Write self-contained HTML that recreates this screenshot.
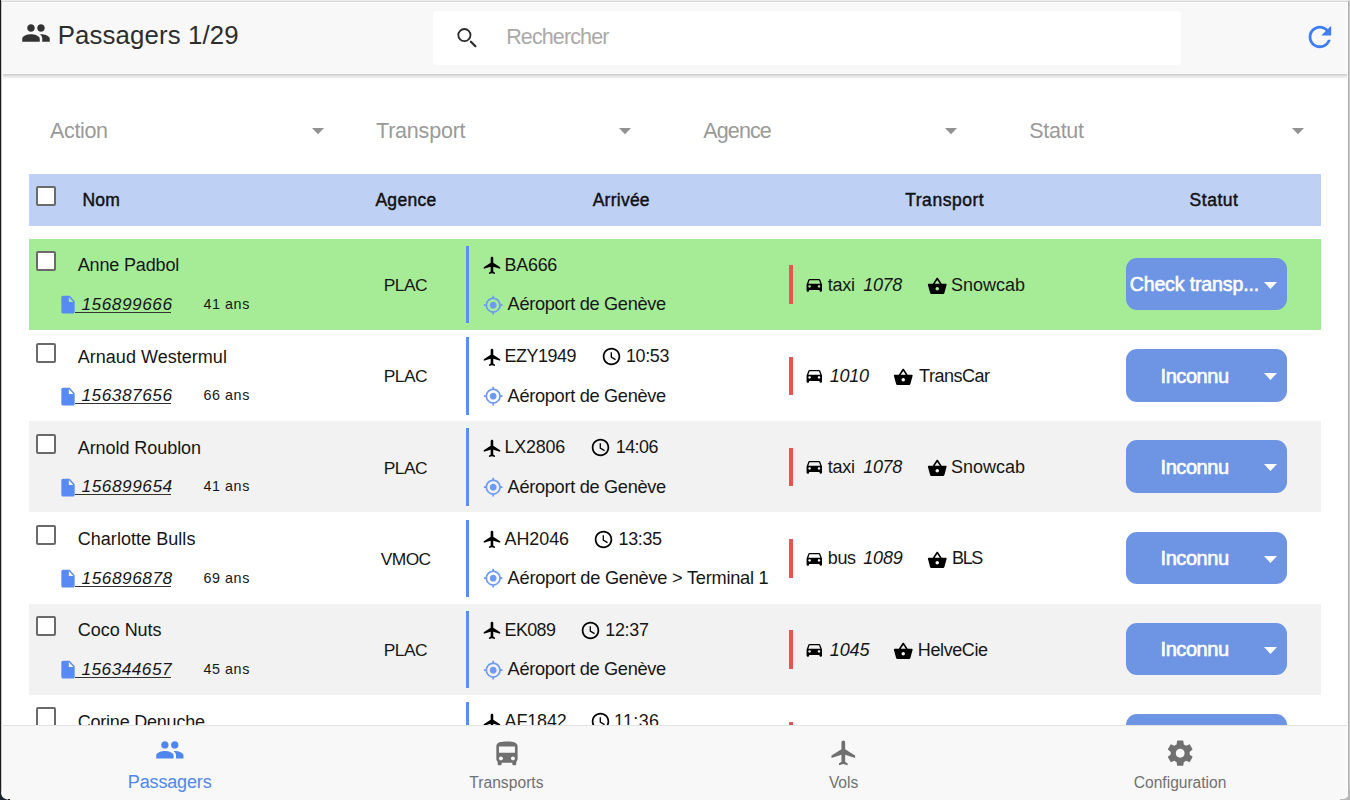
<!DOCTYPE html>
<html><head><meta charset="utf-8"><title>Passagers</title>
<style>
html,body{margin:0;padding:0;}
body{width:1350px;height:800px;overflow:hidden;position:relative;background:#ffffff;font-family:"Liberation Sans", sans-serif;}
</style></head><body>
<div style="position:absolute;left:0.00px;top:0.00px;width:1350.00px;height:74.00px;background:#f8f8f8;box-shadow:0 1.5px 4px rgba(0,0,0,0.24);z-index:2"></div><div style="position:absolute;left:0;top:0;width:0;height:0;z-index:3"><svg style="position:absolute;left:21.00px;top:17.75px;" width="30.00" height="30.00" viewBox="0 0 24 24"><path fill="#333333" d="M16 11c1.66 0 2.99-1.34 2.99-3S17.66 5 16 5c-1.66 0-3 1.34-3 3s1.34 3 3 3zm-8 0c1.66 0 2.99-1.34 2.99-3S9.66 5 8 5C6.34 5 5 6.34 5 8s1.34 3 3 3zm0 2c-2.33 0-7 1.17-7 3.5V19h14v-2.5c0-2.33-4.67-3.5-7-3.5zm8 0c-.29 0-.62.02-.97.05 1.16.84 1.97 1.97 1.97 3.45V19h6v-2.5c0-2.330-4.67-3.5-7-3.5z"/></svg><div style="position:absolute;left:57.70px;top:23.00px;font-size:25.8px;line-height:25.8px;letter-spacing:0.122px;color:#2d2d2d;font-weight:normal;font-style:normal;white-space:nowrap;">Passagers 1/29</div><div style="position:absolute;left:433.00px;top:10.60px;width:748.00px;height:54.20px;background:#ffffff;border-radius:3px"></div><svg style="position:absolute;left:450px;top:20px" width="32" height="32"><circle cx="14.4" cy="15.1" r="6.1" fill="none" stroke="#2a2a2a" stroke-width="1.8"/><line x1="20.9" y1="21.7" x2="25.4" y2="26.2" stroke="#2a2a2a" stroke-width="2.2" stroke-linecap="round"/></svg><div style="position:absolute;left:506.20px;top:27.00px;font-size:21.5px;line-height:21.5px;letter-spacing:-0.884px;color:#a9a9a9;font-weight:normal;font-style:normal;white-space:nowrap;">Rechercher</div><svg style="position:absolute;left:1303.40px;top:19.90px;" width="33.75" height="33.75" viewBox="0 0 24 24"><path fill="#3d7ef3" d="M17.65 6.35C16.2 4.9 14.21 4 12 4c-4.42 0-7.99 3.58-7.99 8s3.57 8 7.99 8c3.73 0 6.84-2.55 7.73-6h-2.08c-.82 2.33-3.04 4-5.65 4-3.31 0-6-2.69-6-6s2.690-6 6-6c1.66 0 3.14.69 4.22 1.78L13 11h7V4l-2.35 2.35z"/></svg></div><div style="position:absolute;left:50.00px;top:121.00px;font-size:21.5px;line-height:21.5px;letter-spacing:-0.354px;color:#9a9a9a;font-weight:normal;font-style:normal;white-space:nowrap;">Action</div><svg style="position:absolute;left:311.30px;top:126.80px;" width="14.00" height="8.20"><polygon fill="#929292" points="1,1 13.00,1 7.00,7.20"/></svg><div style="position:absolute;left:376.00px;top:121.00px;font-size:21.5px;line-height:21.5px;letter-spacing:-0.202px;color:#9a9a9a;font-weight:normal;font-style:normal;white-space:nowrap;">Transport</div><svg style="position:absolute;left:618.00px;top:126.80px;" width="14.00" height="8.20"><polygon fill="#929292" points="1,1 13.00,1 7.00,7.20"/></svg><div style="position:absolute;left:703.30px;top:121.00px;font-size:21.5px;line-height:21.5px;letter-spacing:-0.888px;color:#9a9a9a;font-weight:normal;font-style:normal;white-space:nowrap;">Agence</div><svg style="position:absolute;left:943.50px;top:126.80px;" width="14.00" height="8.20"><polygon fill="#929292" points="1,1 13.00,1 7.00,7.20"/></svg><div style="position:absolute;left:1029.30px;top:121.00px;font-size:21.5px;line-height:21.5px;letter-spacing:-0.294px;color:#9a9a9a;font-weight:normal;font-style:normal;white-space:nowrap;">Statut</div><svg style="position:absolute;left:1291.30px;top:126.80px;" width="14.00" height="8.20"><polygon fill="#929292" points="1,1 13.00,1 7.00,7.20"/></svg><div style="position:absolute;left:29.00px;top:174.00px;width:1292.00px;height:51.50px;background:#bfd0f5;"></div><div style="position:absolute;left:35.50px;top:185.50px;width:20.20px;height:20.50px;background:#ffffff;box-sizing:border-box;border:2.2px solid #6a6a6a;border-radius:2px"></div><div style="position:absolute;left:82.50px;top:192.00px;font-size:17.5px;line-height:17.5px;letter-spacing:0.166px;color:#111;font-weight:normal;font-style:normal;white-space:nowrap;-webkit-text-stroke:0.45px #111;">Nom</div><div style="position:absolute;left:375.40px;top:192.00px;font-size:17.5px;line-height:17.5px;letter-spacing:0.306px;color:#111;font-weight:normal;font-style:normal;white-space:nowrap;-webkit-text-stroke:0.45px #111;">Agence</div><div style="position:absolute;left:592.70px;top:192.00px;font-size:17.5px;line-height:17.5px;letter-spacing:0.245px;color:#111;font-weight:normal;font-style:normal;white-space:nowrap;-webkit-text-stroke:0.45px #111;">Arrivée</div><div style="position:absolute;left:905.20px;top:192.00px;font-size:17.5px;line-height:17.5px;letter-spacing:0.532px;color:#111;font-weight:normal;font-style:normal;white-space:nowrap;-webkit-text-stroke:0.45px #111;">Transport</div><div style="position:absolute;left:1189.60px;top:192.00px;font-size:17.5px;line-height:17.5px;letter-spacing:0.516px;color:#111;font-weight:normal;font-style:normal;white-space:nowrap;-webkit-text-stroke:0.45px #111;">Statut</div><div style="position:absolute;left:29.00px;top:239.00px;width:1292.00px;height:91.20px;background:#a6ec97;"></div><div style="position:absolute;left:35.50px;top:251.20px;width:20.20px;height:20.00px;background:#ffffff;box-sizing:border-box;border:2.2px solid #6a6a6a;border-radius:2px"></div><div style="position:absolute;left:77.70px;top:256.00px;font-size:18px;line-height:18px;letter-spacing:-0.149px;color:#161616;font-weight:normal;font-style:normal;white-space:nowrap;">Anne Padbol</div><svg style="position:absolute;left:57.6px;top:294.20px" width="20" height="21.4" viewBox="0 0 24 24" preserveAspectRatio="none"><path fill="#578af5" d="M6 2c-1.1 0-1.99.9-1.99 2L4 20c0 1.1.89 2 1.99 2H18c1.1 0 2-.9 2-2V8l-6-6H6zm7 7V3.5L18.5 9H13z"/></svg><div style="position:absolute;left:74.80px;top:312.00px;width:96.20px;height:1.20px;background:#333;"></div><div style="position:absolute;left:81.50px;top:296.00px;font-size:17.3px;line-height:17.3px;letter-spacing:0.509px;color:#161616;font-weight:normal;font-style:italic;white-space:nowrap;">156899666</div><div style="position:absolute;left:203.40px;top:297.00px;font-size:14.3px;line-height:14.3px;letter-spacing:0.593px;color:#161616;font-weight:normal;font-style:normal;white-space:nowrap;">41 ans</div><div style="position:absolute;left:383.70px;top:277.00px;font-size:17.4px;line-height:17.4px;letter-spacing:-0.519px;color:#161616;font-weight:normal;font-style:normal;white-space:nowrap;">PLAC</div><div style="position:absolute;left:465.80px;top:245.70px;width:3.50px;height:77.50px;background:#5b8ff7;"></div><svg style="position:absolute;left:481.50px;top:255.40px;" width="20.80" height="20.80" viewBox="0 0 24 24"><path fill="#000" d="M21 16v-2l-8-5V3.5c0-.83-.67-1.5-1.5-1.5S10 2.67 10 3.5V9l-8 5v2l8-2.5V19l-2 1.5V22l3.5-1 3.5 1v-1.5L13 19v-5.5l8 2.5z"/></svg><div style="position:absolute;left:504.60px;top:257.00px;font-size:17.9px;line-height:17.9px;letter-spacing:-0.261px;color:#161616;font-weight:normal;font-style:normal;white-space:nowrap;">BA666</div><svg style="position:absolute;left:482.80px;top:294.50px;" width="20.40" height="20.40" viewBox="0 0 24 24"><path fill="#6d9af5" d="M12 8c-2.21 0-4 1.79-4 4s1.79 4 4 4 4-1.79 4-4-1.79-4-4-4zm8.94 3c-.46-4.17-3.77-7.48-7.94-7.94V1h-2v2.06C6.83 3.52 3.52 6.83 3.06 11H1v2h2.06c.46 4.17 3.77 7.48 7.94 7.94V23h2v-2.06c4.17-.46 7.48-3.77 7.94-7.94H23v-2h-2.06zM12 19c-3.87 0-7-3.13-7-7s3.13-7 7-7 7 3.13 7 7-3.13 7-7 7z"/></svg><div style="position:absolute;left:507.60px;top:295.00px;font-size:18.2px;line-height:18.2px;letter-spacing:-0.305px;color:#161616;font-weight:normal;font-style:normal;white-space:nowrap;">Aéroport de Genève</div><div style="position:absolute;left:789.00px;top:265.40px;width:3.50px;height:38.80px;background:#eb5350;"></div><svg style="position:absolute;left:804.03px;top:274.60px" width="20.6" height="19" viewBox="0 0 24 24" preserveAspectRatio="none"><path fill="#000" d="M18.92 6.01C18.72 5.42 18.16 5 17.5 5h-11c-.66 0-1.21.42-1.42 1.01L3 12v8c0 .55.45 1 1 1h1c.55 0 1-.45 1-1v-1h12v1c0 .55.45 1 1 1h1c.55 0 1-.45 1-1v-8l-2.08-5.99zM6.5 16c-.83 0-1.5-.67-1.5-1.5S5.67 13 6.5 13s1.5.67 1.5 1.5S7.33 16 6.5 16zm11 0c-.83 0-1.5-.67-1.5-1.5s.67-1.5 1.5-1.5 1.5.67 1.5 1.5-.67 1.5-1.5 1.5zM5 11l1.5-4.5h11L19 11H5z"/></svg><div style="position:absolute;left:827.80px;top:276.00px;font-size:18px;line-height:18px;letter-spacing:-0.230px;color:#161616;font-weight:normal;font-style:normal;white-space:nowrap;">taxi</div><div style="position:absolute;left:863.20px;top:276.00px;font-size:18px;line-height:18px;letter-spacing:-0.317px;color:#161616;font-weight:normal;font-style:italic;white-space:nowrap;">1078</div><svg style="position:absolute;left:926.70px;top:275.60px;" width="20.50" height="20.50" viewBox="0 0 24 24"><path fill="#000" d="M17.21 9l-4.38-6.56c-.19-.28-.51-.42-.83-.42-.32 0-.64.14-.83.43L6.79 9H2c-.55 0-1 .45-1 1 0 .09.01.18.04.27l2.54 9.27c.23.84 1 1.46 1.92 1.46h13c.92 0 1.69-.62 1.93-1.46l2.54-9.27L23 10c0-.55-.45-1-1-1h-4.79zM9 9l3-4.4L15 9H9zm3 8c-1.1 0-2-.9-2-2s.9-2 2-2 2 .9 2 2-.9 2-2 2z"/></svg><div style="position:absolute;left:951.00px;top:276.00px;font-size:18px;line-height:18px;letter-spacing:-0.012px;color:#161616;font-weight:normal;font-style:normal;white-space:nowrap;">Snowcab</div><div style="position:absolute;left:1126.00px;top:258.10px;width:161.30px;height:52.20px;background:#6d95e4;border-radius:11px"></div><div style="position:absolute;left:1129.70px;top:275.00px;font-size:19.5px;line-height:19.5px;letter-spacing:-0.117px;color:#ffffff;font-weight:normal;font-style:normal;white-space:nowrap;-webkit-text-stroke:0.6px #fff;">Check transp...</div><svg style="position:absolute;left:1263.00px;top:280.80px;" width="15.00" height="9.00"><polygon fill="#ffffff" points="1,1 14.00,1 7.50,8.00"/></svg><div style="position:absolute;left:29.00px;top:330.30px;width:1292.00px;height:91.20px;background:#ffffff;"></div><div style="position:absolute;left:35.50px;top:342.50px;width:20.20px;height:20.00px;background:#ffffff;box-sizing:border-box;border:2.2px solid #6a6a6a;border-radius:2px"></div><div style="position:absolute;left:77.70px;top:348.00px;font-size:18px;line-height:18px;letter-spacing:0.032px;color:#161616;font-weight:normal;font-style:normal;white-space:nowrap;">Arnaud Westermul</div><svg style="position:absolute;left:57.6px;top:385.50px" width="20" height="21.4" viewBox="0 0 24 24" preserveAspectRatio="none"><path fill="#578af5" d="M6 2c-1.1 0-1.99.9-1.99 2L4 20c0 1.1.89 2 1.99 2H18c1.1 0 2-.9 2-2V8l-6-6H6zm7 7V3.5L18.5 9H13z"/></svg><div style="position:absolute;left:74.80px;top:403.30px;width:96.20px;height:1.20px;background:#333;"></div><div style="position:absolute;left:81.50px;top:387.00px;font-size:17.3px;line-height:17.3px;letter-spacing:0.509px;color:#161616;font-weight:normal;font-style:italic;white-space:nowrap;">156387656</div><div style="position:absolute;left:203.40px;top:388.00px;font-size:14.3px;line-height:14.3px;letter-spacing:0.593px;color:#161616;font-weight:normal;font-style:normal;white-space:nowrap;">66 ans</div><div style="position:absolute;left:383.70px;top:368.00px;font-size:17.4px;line-height:17.4px;letter-spacing:-0.519px;color:#161616;font-weight:normal;font-style:normal;white-space:nowrap;">PLAC</div><div style="position:absolute;left:465.80px;top:337.00px;width:3.50px;height:77.50px;background:#5b8ff7;"></div><svg style="position:absolute;left:481.50px;top:346.70px;" width="20.80" height="20.80" viewBox="0 0 24 24"><path fill="#000" d="M21 16v-2l-8-5V3.5c0-.83-.67-1.5-1.5-1.5S10 2.67 10 3.5V9l-8 5v2l8-2.5V19l-2 1.5V22l3.5-1 3.5 1v-1.5L13 19v-5.5l8 2.5z"/></svg><div style="position:absolute;left:504.60px;top:348.00px;font-size:17.9px;line-height:17.9px;letter-spacing:-0.474px;color:#161616;font-weight:normal;font-style:normal;white-space:nowrap;">EZY1949</div><svg style="position:absolute;left:601.04px;top:346.30px;" width="21.00" height="21.00" viewBox="0 0 24 24"><path fill="#000" d="M11.99 2C6.47 2 2 6.48 2 12s4.47 10 9.99 10C17.52 22 22 17.52 22 12S17.52 2 11.99 2zM12 20c-4.42 0-8-3.58-8-8s3.58-8 8-8 8 3.58 8 8-3.58 8-8 8zm.5-13H11v6l5.25 3.15.75-1.23-4.5-2.67z"/></svg><div style="position:absolute;left:625.90px;top:348.00px;font-size:17.9px;line-height:17.9px;letter-spacing:-0.324px;color:#161616;font-weight:normal;font-style:normal;white-space:nowrap;">10:53</div><svg style="position:absolute;left:482.80px;top:385.80px;" width="20.40" height="20.40" viewBox="0 0 24 24"><path fill="#6d9af5" d="M12 8c-2.21 0-4 1.79-4 4s1.79 4 4 4 4-1.79 4-4-1.79-4-4-4zm8.94 3c-.46-4.17-3.77-7.48-7.94-7.94V1h-2v2.06C6.83 3.52 3.52 6.83 3.06 11H1v2h2.06c.46 4.17 3.77 7.48 7.94 7.94V23h2v-2.06c4.17-.46 7.48-3.77 7.94-7.94H23v-2h-2.06zM12 19c-3.87 0-7-3.13-7-7s3.13-7 7-7 7 3.13 7 7-3.13 7-7 7z"/></svg><div style="position:absolute;left:507.60px;top:387.00px;font-size:18.2px;line-height:18.2px;letter-spacing:-0.305px;color:#161616;font-weight:normal;font-style:normal;white-space:nowrap;">Aéroport de Genève</div><div style="position:absolute;left:789.00px;top:356.70px;width:3.50px;height:38.80px;background:#eb5350;"></div><svg style="position:absolute;left:804.03px;top:365.90px" width="20.6" height="19" viewBox="0 0 24 24" preserveAspectRatio="none"><path fill="#000" d="M18.92 6.01C18.72 5.42 18.16 5 17.5 5h-11c-.66 0-1.21.42-1.42 1.01L3 12v8c0 .55.45 1 1 1h1c.55 0 1-.45 1-1v-1h12v1c0 .55.45 1 1 1h1c.55 0 1-.45 1-1v-8l-2.08-5.99zM6.5 16c-.83 0-1.5-.67-1.5-1.5S5.67 13 6.5 13s1.5.67 1.5 1.5S7.33 16 6.5 16zm11 0c-.83 0-1.5-.67-1.5-1.5s.67-1.5 1.5-1.5 1.5.67 1.5 1.5-.67 1.5-1.5 1.5zM5 11l1.5-4.5h11L19 11H5z"/></svg><div style="position:absolute;left:829.70px;top:367.00px;font-size:18px;line-height:18px;letter-spacing:-0.250px;color:#161616;font-weight:normal;font-style:italic;white-space:nowrap;">1010</div><svg style="position:absolute;left:892.70px;top:366.90px;" width="20.50" height="20.50" viewBox="0 0 24 24"><path fill="#000" d="M17.21 9l-4.38-6.56c-.19-.28-.51-.42-.83-.42-.32 0-.64.14-.83.43L6.79 9H2c-.55 0-1 .45-1 1 0 .09.01.18.04.27l2.54 9.27c.23.84 1 1.46 1.92 1.46h13c.92 0 1.69-.62 1.93-1.46l2.54-9.27L23 10c0-.55-.45-1-1-1h-4.79zM9 9l3-4.4L15 9H9zm3 8c-1.1 0-2-.9-2-2s.9-2 2-2 2 .9 2 2-.9 2-2 2z"/></svg><div style="position:absolute;left:919.10px;top:367.00px;font-size:18px;line-height:18px;letter-spacing:-0.491px;color:#161616;font-weight:normal;font-style:normal;white-space:nowrap;">TransCar</div><div style="position:absolute;left:1126.00px;top:349.40px;width:161.30px;height:52.20px;background:#6d95e4;border-radius:11px"></div><div style="position:absolute;left:1160.60px;top:366.00px;font-size:20px;line-height:20px;letter-spacing:-0.458px;color:#ffffff;font-weight:normal;font-style:normal;white-space:nowrap;-webkit-text-stroke:0.6px #fff;">Inconnu</div><svg style="position:absolute;left:1263.00px;top:372.10px;" width="15.00" height="9.00"><polygon fill="#ffffff" points="1,1 14.00,1 7.50,8.00"/></svg><div style="position:absolute;left:29.00px;top:421.30px;width:1292.00px;height:91.20px;background:#f2f2f2;"></div><div style="position:absolute;left:35.50px;top:433.50px;width:20.20px;height:20.00px;background:#ffffff;box-sizing:border-box;border:2.2px solid #6a6a6a;border-radius:2px"></div><div style="position:absolute;left:77.70px;top:439.00px;font-size:18px;line-height:18px;letter-spacing:-0.055px;color:#161616;font-weight:normal;font-style:normal;white-space:nowrap;">Arnold Roublon</div><svg style="position:absolute;left:57.6px;top:476.50px" width="20" height="21.4" viewBox="0 0 24 24" preserveAspectRatio="none"><path fill="#578af5" d="M6 2c-1.1 0-1.99.9-1.99 2L4 20c0 1.1.89 2 1.99 2H18c1.1 0 2-.9 2-2V8l-6-6H6zm7 7V3.5L18.5 9H13z"/></svg><div style="position:absolute;left:74.80px;top:494.30px;width:96.20px;height:1.20px;background:#333;"></div><div style="position:absolute;left:81.50px;top:478.00px;font-size:17.3px;line-height:17.3px;letter-spacing:0.514px;color:#161616;font-weight:normal;font-style:italic;white-space:nowrap;">156899654</div><div style="position:absolute;left:203.40px;top:479.00px;font-size:14.3px;line-height:14.3px;letter-spacing:0.593px;color:#161616;font-weight:normal;font-style:normal;white-space:nowrap;">41 ans</div><div style="position:absolute;left:383.70px;top:460.00px;font-size:17.4px;line-height:17.4px;letter-spacing:-0.519px;color:#161616;font-weight:normal;font-style:normal;white-space:nowrap;">PLAC</div><div style="position:absolute;left:465.80px;top:428.00px;width:3.50px;height:77.50px;background:#5b8ff7;"></div><svg style="position:absolute;left:481.50px;top:437.70px;" width="20.80" height="20.80" viewBox="0 0 24 24"><path fill="#000" d="M21 16v-2l-8-5V3.5c0-.83-.67-1.5-1.5-1.5S10 2.67 10 3.5V9l-8 5v2l8-2.5V19l-2 1.5V22l3.5-1 3.5 1v-1.5L13 19v-5.5l8 2.5z"/></svg><div style="position:absolute;left:504.60px;top:439.00px;font-size:17.9px;line-height:17.9px;letter-spacing:-0.222px;color:#161616;font-weight:normal;font-style:normal;white-space:nowrap;">LX2806</div><svg style="position:absolute;left:590.24px;top:437.30px;" width="21.00" height="21.00" viewBox="0 0 24 24"><path fill="#000" d="M11.99 2C6.47 2 2 6.48 2 12s4.47 10 9.99 10C17.52 22 22 17.52 22 12S17.52 2 11.99 2zM12 20c-4.42 0-8-3.58-8-8s3.58-8 8-8 8 3.58 8 8-3.58 8-8 8zm.5-13H11v6l5.25 3.15.75-1.23-4.5-2.67z"/></svg><div style="position:absolute;left:615.70px;top:439.00px;font-size:17.9px;line-height:17.9px;letter-spacing:-0.499px;color:#161616;font-weight:normal;font-style:normal;white-space:nowrap;">14:06</div><svg style="position:absolute;left:482.80px;top:476.80px;" width="20.40" height="20.40" viewBox="0 0 24 24"><path fill="#6d9af5" d="M12 8c-2.21 0-4 1.79-4 4s1.79 4 4 4 4-1.79 4-4-1.79-4-4-4zm8.94 3c-.46-4.17-3.77-7.48-7.94-7.94V1h-2v2.06C6.83 3.52 3.52 6.83 3.06 11H1v2h2.06c.46 4.17 3.77 7.48 7.94 7.94V23h2v-2.06c4.17-.46 7.48-3.77 7.94-7.94H23v-2h-2.06zM12 19c-3.87 0-7-3.13-7-7s3.13-7 7-7 7 3.13 7 7-3.13 7-7 7z"/></svg><div style="position:absolute;left:507.60px;top:478.00px;font-size:18.2px;line-height:18.2px;letter-spacing:-0.305px;color:#161616;font-weight:normal;font-style:normal;white-space:nowrap;">Aéroport de Genève</div><div style="position:absolute;left:789.00px;top:447.70px;width:3.50px;height:38.80px;background:#eb5350;"></div><svg style="position:absolute;left:804.03px;top:456.90px" width="20.6" height="19" viewBox="0 0 24 24" preserveAspectRatio="none"><path fill="#000" d="M18.92 6.01C18.72 5.42 18.16 5 17.5 5h-11c-.66 0-1.21.42-1.42 1.01L3 12v8c0 .55.45 1 1 1h1c.55 0 1-.45 1-1v-1h12v1c0 .55.45 1 1 1h1c.55 0 1-.45 1-1v-8l-2.08-5.99zM6.5 16c-.83 0-1.5-.67-1.5-1.5S5.67 13 6.5 13s1.5.67 1.5 1.5S7.33 16 6.5 16zm11 0c-.83 0-1.5-.67-1.5-1.5s.67-1.5 1.5-1.5 1.5.67 1.5 1.5-.67 1.5-1.5 1.5zM5 11l1.5-4.5h11L19 11H5z"/></svg><div style="position:absolute;left:827.80px;top:458.00px;font-size:18px;line-height:18px;letter-spacing:-0.230px;color:#161616;font-weight:normal;font-style:normal;white-space:nowrap;">taxi</div><div style="position:absolute;left:863.20px;top:458.00px;font-size:18px;line-height:18px;letter-spacing:-0.317px;color:#161616;font-weight:normal;font-style:italic;white-space:nowrap;">1078</div><svg style="position:absolute;left:926.70px;top:457.90px;" width="20.50" height="20.50" viewBox="0 0 24 24"><path fill="#000" d="M17.21 9l-4.38-6.56c-.19-.28-.51-.42-.83-.42-.32 0-.64.14-.83.43L6.79 9H2c-.55 0-1 .45-1 1 0 .09.01.18.04.27l2.54 9.27c.23.84 1 1.46 1.92 1.46h13c.92 0 1.69-.62 1.93-1.46l2.54-9.27L23 10c0-.55-.45-1-1-1h-4.79zM9 9l3-4.4L15 9H9zm3 8c-1.1 0-2-.9-2-2s.9-2 2-2 2 .9 2 2-.9 2-2 2z"/></svg><div style="position:absolute;left:951.00px;top:458.00px;font-size:18px;line-height:18px;letter-spacing:-0.012px;color:#161616;font-weight:normal;font-style:normal;white-space:nowrap;">Snowcab</div><div style="position:absolute;left:1126.00px;top:440.40px;width:161.30px;height:52.20px;background:#6d95e4;border-radius:11px"></div><div style="position:absolute;left:1160.60px;top:457.00px;font-size:20px;line-height:20px;letter-spacing:-0.458px;color:#ffffff;font-weight:normal;font-style:normal;white-space:nowrap;-webkit-text-stroke:0.6px #fff;">Inconnu</div><svg style="position:absolute;left:1263.00px;top:463.10px;" width="15.00" height="9.00"><polygon fill="#ffffff" points="1,1 14.00,1 7.50,8.00"/></svg><div style="position:absolute;left:29.00px;top:512.90px;width:1292.00px;height:91.20px;background:#ffffff;"></div><div style="position:absolute;left:35.50px;top:525.10px;width:20.20px;height:20.00px;background:#ffffff;box-sizing:border-box;border:2.2px solid #6a6a6a;border-radius:2px"></div><div style="position:absolute;left:77.70px;top:530.00px;font-size:18px;line-height:18px;letter-spacing:0.047px;color:#161616;font-weight:normal;font-style:normal;white-space:nowrap;">Charlotte Bulls</div><svg style="position:absolute;left:57.6px;top:568.10px" width="20" height="21.4" viewBox="0 0 24 24" preserveAspectRatio="none"><path fill="#578af5" d="M6 2c-1.1 0-1.99.9-1.99 2L4 20c0 1.1.89 2 1.99 2H18c1.1 0 2-.9 2-2V8l-6-6H6zm7 7V3.5L18.5 9H13z"/></svg><div style="position:absolute;left:74.80px;top:585.90px;width:96.20px;height:1.20px;background:#333;"></div><div style="position:absolute;left:81.50px;top:570.00px;font-size:17.3px;line-height:17.3px;letter-spacing:0.514px;color:#161616;font-weight:normal;font-style:italic;white-space:nowrap;">156896878</div><div style="position:absolute;left:203.40px;top:571.00px;font-size:14.3px;line-height:14.3px;letter-spacing:0.593px;color:#161616;font-weight:normal;font-style:normal;white-space:nowrap;">69 ans</div><div style="position:absolute;left:380.80px;top:551.00px;font-size:17.4px;line-height:17.4px;letter-spacing:-0.600px;color:#161616;font-weight:normal;font-style:normal;white-space:nowrap;">VMOC</div><div style="position:absolute;left:465.80px;top:519.60px;width:3.50px;height:77.50px;background:#5b8ff7;"></div><svg style="position:absolute;left:481.50px;top:529.30px;" width="20.80" height="20.80" viewBox="0 0 24 24"><path fill="#000" d="M21 16v-2l-8-5V3.5c0-.83-.67-1.5-1.5-1.5S10 2.67 10 3.5V9l-8 5v2l8-2.5V19l-2 1.5V22l3.5-1 3.5 1v-1.5L13 19v-5.5l8 2.5z"/></svg><div style="position:absolute;left:504.60px;top:531.00px;font-size:17.9px;line-height:17.9px;letter-spacing:-0.042px;color:#161616;font-weight:normal;font-style:normal;white-space:nowrap;">AH2046</div><svg style="position:absolute;left:593.14px;top:528.90px;" width="21.00" height="21.00" viewBox="0 0 24 24"><path fill="#000" d="M11.99 2C6.47 2 2 6.48 2 12s4.47 10 9.99 10C17.52 22 22 17.52 22 12S17.52 2 11.99 2zM12 20c-4.42 0-8-3.58-8-8s3.58-8 8-8 8 3.58 8 8-3.58 8-8 8zm.5-13H11v6l5.25 3.15.75-1.23-4.5-2.67z"/></svg><div style="position:absolute;left:618.50px;top:531.00px;font-size:17.9px;line-height:17.9px;letter-spacing:-0.299px;color:#161616;font-weight:normal;font-style:normal;white-space:nowrap;">13:35</div><svg style="position:absolute;left:482.80px;top:568.40px;" width="20.40" height="20.40" viewBox="0 0 24 24"><path fill="#6d9af5" d="M12 8c-2.21 0-4 1.79-4 4s1.79 4 4 4 4-1.79 4-4-1.79-4-4-4zm8.94 3c-.46-4.17-3.77-7.48-7.94-7.94V1h-2v2.06C6.83 3.52 3.52 6.83 3.06 11H1v2h2.06c.46 4.17 3.77 7.48 7.94 7.94V23h2v-2.06c4.17-.46 7.48-3.77 7.94-7.94H23v-2h-2.06zM12 19c-3.87 0-7-3.13-7-7s3.13-7 7-7 7 3.13 7 7-3.13 7-7 7z"/></svg><div style="position:absolute;left:507.60px;top:569.00px;font-size:18.2px;line-height:18.2px;letter-spacing:-0.232px;color:#161616;font-weight:normal;font-style:normal;white-space:nowrap;">Aéroport de Genève &gt; Terminal 1</div><div style="position:absolute;left:789.00px;top:539.30px;width:3.50px;height:38.80px;background:#eb5350;"></div><svg style="position:absolute;left:804.03px;top:548.50px" width="20.6" height="19" viewBox="0 0 24 24" preserveAspectRatio="none"><path fill="#000" d="M18.92 6.01C18.72 5.42 18.16 5 17.5 5h-11c-.66 0-1.21.42-1.42 1.01L3 12v8c0 .55.45 1 1 1h1c.55 0 1-.45 1-1v-1h12v1c0 .55.45 1 1 1h1c.55 0 1-.45 1-1v-8l-2.08-5.99zM6.5 16c-.83 0-1.5-.67-1.5-1.5S5.67 13 6.5 13s1.5.67 1.5 1.5S7.33 16 6.5 16zm11 0c-.83 0-1.5-.67-1.5-1.5s.67-1.5 1.5-1.5 1.5.67 1.5 1.5-.67 1.5-1.5 1.5zM5 11l1.5-4.5h11L19 11H5z"/></svg><div style="position:absolute;left:827.80px;top:549.00px;font-size:18px;line-height:18px;letter-spacing:-0.362px;color:#161616;font-weight:normal;font-style:normal;white-space:nowrap;">bus</div><div style="position:absolute;left:863.20px;top:549.00px;font-size:18px;line-height:18px;letter-spacing:-0.117px;color:#161616;font-weight:normal;font-style:italic;white-space:nowrap;">1089</div><svg style="position:absolute;left:926.70px;top:549.50px;" width="20.50" height="20.50" viewBox="0 0 24 24"><path fill="#000" d="M17.21 9l-4.38-6.56c-.19-.28-.51-.42-.83-.42-.32 0-.64.14-.83.43L6.79 9H2c-.55 0-1 .45-1 1 0 .09.01.18.04.27l2.54 9.27c.23.84 1 1.46 1.92 1.46h13c.92 0 1.69-.62 1.93-1.46l2.54-9.27L23 10c0-.55-.45-1-1-1h-4.79zM9 9l3-4.4L15 9H9zm3 8c-1.1 0-2-.9-2-2s.9-2 2-2 2 .9 2 2-.9 2-2 2z"/></svg><div style="position:absolute;left:952.00px;top:549.00px;font-size:18px;line-height:18px;letter-spacing:-1.360px;color:#161616;font-weight:normal;font-style:normal;white-space:nowrap;">BLS</div><div style="position:absolute;left:1126.00px;top:532.00px;width:161.30px;height:52.20px;background:#6d95e4;border-radius:11px"></div><div style="position:absolute;left:1160.60px;top:548.00px;font-size:20px;line-height:20px;letter-spacing:-0.458px;color:#ffffff;font-weight:normal;font-style:normal;white-space:nowrap;-webkit-text-stroke:0.6px #fff;">Inconnu</div><svg style="position:absolute;left:1263.00px;top:554.70px;" width="15.00" height="9.00"><polygon fill="#ffffff" points="1,1 14.00,1 7.50,8.00"/></svg><div style="position:absolute;left:29.00px;top:604.00px;width:1292.00px;height:91.20px;background:#f2f2f2;"></div><div style="position:absolute;left:35.50px;top:616.20px;width:20.20px;height:20.00px;background:#ffffff;box-sizing:border-box;border:2.2px solid #6a6a6a;border-radius:2px"></div><div style="position:absolute;left:77.70px;top:621.00px;font-size:18px;line-height:18px;letter-spacing:-0.014px;color:#161616;font-weight:normal;font-style:normal;white-space:nowrap;">Coco Nuts</div><svg style="position:absolute;left:57.6px;top:659.20px" width="20" height="21.4" viewBox="0 0 24 24" preserveAspectRatio="none"><path fill="#578af5" d="M6 2c-1.1 0-1.99.9-1.99 2L4 20c0 1.1.89 2 1.99 2H18c1.1 0 2-.9 2-2V8l-6-6H6zm7 7V3.5L18.5 9H13z"/></svg><div style="position:absolute;left:74.80px;top:677.00px;width:96.20px;height:1.20px;background:#333;"></div><div style="position:absolute;left:81.50px;top:661.00px;font-size:17.3px;line-height:17.3px;letter-spacing:0.444px;color:#161616;font-weight:normal;font-style:italic;white-space:nowrap;">156344657</div><div style="position:absolute;left:203.40px;top:662.00px;font-size:14.3px;line-height:14.3px;letter-spacing:0.593px;color:#161616;font-weight:normal;font-style:normal;white-space:nowrap;">45 ans</div><div style="position:absolute;left:383.70px;top:642.00px;font-size:17.4px;line-height:17.4px;letter-spacing:-0.519px;color:#161616;font-weight:normal;font-style:normal;white-space:nowrap;">PLAC</div><div style="position:absolute;left:465.80px;top:610.70px;width:3.50px;height:77.50px;background:#5b8ff7;"></div><svg style="position:absolute;left:481.50px;top:620.40px;" width="20.80" height="20.80" viewBox="0 0 24 24"><path fill="#000" d="M21 16v-2l-8-5V3.5c0-.83-.67-1.5-1.5-1.5S10 2.67 10 3.5V9l-8 5v2l8-2.5V19l-2 1.5V22l3.5-1 3.5 1v-1.5L13 19v-5.5l8 2.5z"/></svg><div style="position:absolute;left:504.60px;top:622.00px;font-size:17.9px;line-height:17.9px;letter-spacing:-0.611px;color:#161616;font-weight:normal;font-style:normal;white-space:nowrap;">EK089</div><svg style="position:absolute;left:580.24px;top:620.00px;" width="21.00" height="21.00" viewBox="0 0 24 24"><path fill="#000" d="M11.99 2C6.47 2 2 6.48 2 12s4.47 10 9.99 10C17.52 22 22 17.52 22 12S17.52 2 11.99 2zM12 20c-4.42 0-8-3.58-8-8s3.58-8 8-8 8 3.58 8 8-3.58 8-8 8zm.5-13H11v6l5.25 3.15.75-1.23-4.5-2.67z"/></svg><div style="position:absolute;left:605.30px;top:622.00px;font-size:17.9px;line-height:17.9px;letter-spacing:-0.299px;color:#161616;font-weight:normal;font-style:normal;white-space:nowrap;">12:37</div><svg style="position:absolute;left:482.80px;top:659.50px;" width="20.40" height="20.40" viewBox="0 0 24 24"><path fill="#6d9af5" d="M12 8c-2.21 0-4 1.79-4 4s1.79 4 4 4 4-1.79 4-4-1.79-4-4-4zm8.94 3c-.46-4.17-3.77-7.48-7.94-7.94V1h-2v2.06C6.83 3.52 3.52 6.83 3.06 11H1v2h2.06c.46 4.17 3.77 7.48 7.94 7.94V23h2v-2.06c4.17-.46 7.48-3.77 7.94-7.94H23v-2h-2.06zM12 19c-3.87 0-7-3.13-7-7s3.13-7 7-7 7 3.13 7 7-3.13 7-7 7z"/></svg><div style="position:absolute;left:507.60px;top:660.00px;font-size:18.2px;line-height:18.2px;letter-spacing:-0.305px;color:#161616;font-weight:normal;font-style:normal;white-space:nowrap;">Aéroport de Genève</div><div style="position:absolute;left:789.00px;top:630.40px;width:3.50px;height:38.80px;background:#eb5350;"></div><svg style="position:absolute;left:804.03px;top:639.60px" width="20.6" height="19" viewBox="0 0 24 24" preserveAspectRatio="none"><path fill="#000" d="M18.92 6.01C18.72 5.42 18.16 5 17.5 5h-11c-.66 0-1.21.42-1.42 1.01L3 12v8c0 .55.45 1 1 1h1c.55 0 1-.45 1-1v-1h12v1c0 .55.45 1 1 1h1c.55 0 1-.45 1-1v-8l-2.08-5.99zM6.5 16c-.83 0-1.5-.67-1.5-1.5S5.67 13 6.5 13s1.5.67 1.5 1.5S7.33 16 6.5 16zm11 0c-.83 0-1.5-.67-1.5-1.5s.67-1.5 1.5-1.5 1.5.67 1.5 1.5-.67 1.5-1.5 1.5zM5 11l1.5-4.5h11L19 11H5z"/></svg><div style="position:absolute;left:829.70px;top:641.00px;font-size:18px;line-height:18px;letter-spacing:-0.065px;color:#161616;font-weight:normal;font-style:italic;white-space:nowrap;">1045</div><svg style="position:absolute;left:892.70px;top:640.60px;" width="20.50" height="20.50" viewBox="0 0 24 24"><path fill="#000" d="M17.21 9l-4.38-6.56c-.19-.28-.51-.42-.83-.42-.32 0-.64.14-.83.43L6.79 9H2c-.55 0-1 .45-1 1 0 .09.01.18.04.27l2.54 9.27c.23.84 1 1.46 1.92 1.46h13c.92 0 1.69-.62 1.93-1.46l2.54-9.27L23 10c0-.55-.45-1-1-1h-4.79zM9 9l3-4.4L15 9H9zm3 8c-1.1 0-2-.9-2-2s.9-2 2-2 2 .9 2 2-.9 2-2 2z"/></svg><div style="position:absolute;left:917.80px;top:641.00px;font-size:18px;line-height:18px;letter-spacing:-0.391px;color:#161616;font-weight:normal;font-style:normal;white-space:nowrap;">HelveCie</div><div style="position:absolute;left:1126.00px;top:623.10px;width:161.30px;height:52.20px;background:#6d95e4;border-radius:11px"></div><div style="position:absolute;left:1160.60px;top:639.00px;font-size:20px;line-height:20px;letter-spacing:-0.458px;color:#ffffff;font-weight:normal;font-style:normal;white-space:nowrap;-webkit-text-stroke:0.6px #fff;">Inconnu</div><svg style="position:absolute;left:1263.00px;top:645.80px;" width="15.00" height="9.00"><polygon fill="#ffffff" points="1,1 14.00,1 7.50,8.00"/></svg><div style="position:absolute;left:29.00px;top:695.20px;width:1292.00px;height:91.20px;background:#ffffff;"></div><div style="position:absolute;left:35.50px;top:707.40px;width:20.20px;height:20.00px;background:#ffffff;box-sizing:border-box;border:2.2px solid #6a6a6a;border-radius:2px"></div><div style="position:absolute;left:77.70px;top:713.00px;font-size:18px;line-height:18px;letter-spacing:-0.215px;color:#161616;font-weight:normal;font-style:normal;white-space:nowrap;">Corine Denuche</div><svg style="position:absolute;left:57.6px;top:750.40px" width="20" height="21.4" viewBox="0 0 24 24" preserveAspectRatio="none"><path fill="#578af5" d="M6 2c-1.1 0-1.99.9-1.99 2L4 20c0 1.1.89 2 1.99 2H18c1.1 0 2-.9 2-2V8l-6-6H6zm7 7V3.5L18.5 9H13z"/></svg><div style="position:absolute;left:74.80px;top:768.20px;width:96.20px;height:1.20px;background:#333;"></div><div style="position:absolute;left:81.50px;top:752.00px;font-size:17.3px;line-height:17.3px;letter-spacing:0.514px;color:#161616;font-weight:normal;font-style:italic;white-space:nowrap;">156000000</div><div style="position:absolute;left:203.40px;top:753.00px;font-size:14.3px;line-height:14.3px;letter-spacing:0.593px;color:#161616;font-weight:normal;font-style:normal;white-space:nowrap;">50 ans</div><div style="position:absolute;left:383.70px;top:733.00px;font-size:17.4px;line-height:17.4px;letter-spacing:-0.519px;color:#161616;font-weight:normal;font-style:normal;white-space:nowrap;">PLAC</div><div style="position:absolute;left:465.80px;top:701.90px;width:3.50px;height:77.50px;background:#5b8ff7;"></div><svg style="position:absolute;left:481.50px;top:711.60px;" width="20.80" height="20.80" viewBox="0 0 24 24"><path fill="#000" d="M21 16v-2l-8-5V3.5c0-.83-.67-1.5-1.5-1.5S10 2.67 10 3.5V9l-8 5v2l8-2.5V19l-2 1.5V22l3.5-1 3.5 1v-1.5L13 19v-5.5l8 2.5z"/></svg><div style="position:absolute;left:504.60px;top:713.00px;font-size:17.9px;line-height:17.9px;letter-spacing:-0.099px;color:#161616;font-weight:normal;font-style:normal;white-space:nowrap;">AF1842</div><svg style="position:absolute;left:590.44px;top:711.20px;" width="21.00" height="21.00" viewBox="0 0 24 24"><path fill="#000" d="M11.99 2C6.47 2 2 6.48 2 12s4.47 10 9.99 10C17.52 22 22 17.52 22 12S17.52 2 11.99 2zM12 20c-4.42 0-8-3.58-8-8s3.58-8 8-8 8 3.58 8 8-3.58 8-8 8zm.5-13H11v6l5.25 3.15.75-1.23-4.5-2.67z"/></svg><div style="position:absolute;left:614.00px;top:713.00px;font-size:17.9px;line-height:17.9px;letter-spacing:0.387px;color:#161616;font-weight:normal;font-style:normal;white-space:nowrap;">11:36</div><svg style="position:absolute;left:482.80px;top:750.70px;" width="20.40" height="20.40" viewBox="0 0 24 24"><path fill="#6d9af5" d="M12 8c-2.21 0-4 1.79-4 4s1.79 4 4 4 4-1.79 4-4-1.79-4-4-4zm8.94 3c-.46-4.17-3.77-7.48-7.94-7.94V1h-2v2.06C6.83 3.52 3.52 6.83 3.06 11H1v2h2.06c.46 4.17 3.77 7.48 7.94 7.94V23h2v-2.06c4.17-.46 7.48-3.77 7.94-7.94H23v-2h-2.06zM12 19c-3.87 0-7-3.13-7-7s3.13-7 7-7 7 3.13 7 7-3.13 7-7 7z"/></svg><div style="position:absolute;left:507.60px;top:752.00px;font-size:18.2px;line-height:18.2px;letter-spacing:-0.305px;color:#161616;font-weight:normal;font-style:normal;white-space:nowrap;">Aéroport de Genève</div><div style="position:absolute;left:789.00px;top:721.60px;width:3.50px;height:38.80px;background:#eb5350;"></div><svg style="position:absolute;left:804.03px;top:730.80px" width="20.6" height="19" viewBox="0 0 24 24" preserveAspectRatio="none"><path fill="#000" d="M18.92 6.01C18.72 5.42 18.16 5 17.5 5h-11c-.66 0-1.21.42-1.42 1.01L3 12v8c0 .55.45 1 1 1h1c.55 0 1-.45 1-1v-1h12v1c0 .55.45 1 1 1h1c.55 0 1-.45 1-1v-8l-2.08-5.99zM6.5 16c-.83 0-1.5-.67-1.5-1.5S5.67 13 6.5 13s1.5.67 1.5 1.5S7.33 16 6.5 16zm11 0c-.83 0-1.5-.67-1.5-1.5s.67-1.5 1.5-1.5 1.5.67 1.5 1.5-.67 1.5-1.5 1.5zM5 11l1.5-4.5h11L19 11H5z"/></svg><div style="position:absolute;left:827.80px;top:732.00px;font-size:18px;line-height:18px;letter-spacing:-0.230px;color:#161616;font-weight:normal;font-style:normal;white-space:nowrap;">taxi</div><div style="position:absolute;left:863.20px;top:732.00px;font-size:18px;line-height:18px;letter-spacing:-0.317px;color:#161616;font-weight:normal;font-style:italic;white-space:nowrap;">1078</div><svg style="position:absolute;left:926.70px;top:731.80px;" width="20.50" height="20.50" viewBox="0 0 24 24"><path fill="#000" d="M17.21 9l-4.38-6.56c-.19-.28-.51-.42-.83-.42-.32 0-.64.14-.83.43L6.79 9H2c-.55 0-1 .45-1 1 0 .09.01.18.04.27l2.54 9.27c.23.84 1 1.46 1.92 1.46h13c.92 0 1.69-.62 1.93-1.46l2.54-9.27L23 10c0-.55-.45-1-1-1h-4.79zM9 9l3-4.4L15 9H9zm3 8c-1.1 0-2-.9-2-2s.9-2 2-2 2 .9 2 2-.9 2-2 2z"/></svg><div style="position:absolute;left:951.00px;top:732.00px;font-size:18px;line-height:18px;letter-spacing:-0.012px;color:#161616;font-weight:normal;font-style:normal;white-space:nowrap;">Snowcab</div><div style="position:absolute;left:1126.00px;top:714.30px;width:161.30px;height:52.20px;background:#6d95e4;border-radius:11px"></div><div style="position:absolute;left:1160.60px;top:731.00px;font-size:20px;line-height:20px;letter-spacing:-0.458px;color:#ffffff;font-weight:normal;font-style:normal;white-space:nowrap;-webkit-text-stroke:0.6px #fff;">Inconnu</div><svg style="position:absolute;left:1263.00px;top:737.00px;" width="15.00" height="9.00"><polygon fill="#ffffff" points="1,1 14.00,1 7.50,8.00"/></svg><div style="position:absolute;left:0.00px;top:725.40px;width:1350.00px;height:74.60px;background:#f8f8f8;border-top:1px solid #e2e2e2;box-sizing:border-box;z-index:4"></div><div style="position:absolute;left:0;top:0;width:0;height:0;z-index:5"><svg style="position:absolute;left:154.70px;top:735.20px;" width="29.70" height="29.70" viewBox="0 0 24 24"><path fill="#4f87ee" d="M16 11c1.66 0 2.99-1.34 2.99-3S17.66 5 16 5c-1.66 0-3 1.34-3 3s1.34 3 3 3zm-8 0c1.66 0 2.99-1.34 2.99-3S9.66 5 8 5C6.34 5 5 6.34 5 8s1.34 3 3 3zm0 2c-2.33 0-7 1.17-7 3.5V19h14v-2.5c0-2.33-4.67-3.5-7-3.5zm8 0c-.29 0-.62.02-.97.05 1.16.84 1.97 1.97 1.97 3.45V19h6v-2.5c0-2.330-4.67-3.5-7-3.5z"/></svg><div style="position:absolute;left:127.80px;top:773.00px;font-size:18px;line-height:18px;letter-spacing:-0.144px;color:#4f87ee;font-weight:normal;font-style:normal;white-space:nowrap;">Passagers</div><svg style="position:absolute;left:490.6px;top:739px" width="31.95" height="30" viewBox="0 0 24 24" preserveAspectRatio="none"><path fill="#707070" d="M4 16c0 .88.39 1.67 1 2.22V20c0 .55.45 1 1 1h1c.55 0 1-.45 1-1v-1h8v1c0 .55.45 1 1 1h1c.55 0 1-.45 1-1v-1.78c.61-.55 1-1.34 1-2.22V6c0-3.5-3.58-4-8-4s-8 .5-8 4v10zm3.5 1c-.83 0-1.5-.67-1.5-1.5S6.67 14 7.5 14s1.5.67 1.5 1.5S8.33 17 7.5 17zm9 0c-.83 0-1.5-.67-1.5-1.5s.67-1.5 1.5-1.5 1.5.67 1.5 1.5-.67 1.5-1.5 1.5zm1.5-6H6V6h12v5z"/></svg><div style="position:absolute;left:469.20px;top:775.00px;font-size:15.6px;line-height:15.6px;letter-spacing:0.046px;color:#707070;font-weight:normal;font-style:normal;white-space:nowrap;">Transports</div><svg style="position:absolute;left:829.00px;top:738.00px;" width="29.85" height="29.85" viewBox="0 0 24 24"><path fill="#707070" d="M21 16v-2l-8-5V3.5c0-.83-.67-1.5-1.5-1.5S10 2.67 10 3.5V9l-8 5v2l8-2.5V19l-2 1.5V22l3.5-1 3.5 1v-1.5L13 19v-5.5l8 2.5z"/></svg><div style="position:absolute;left:828.90px;top:775.00px;font-size:15.6px;line-height:15.6px;letter-spacing:-0.061px;color:#707070;font-weight:normal;font-style:normal;white-space:nowrap;">Vols</div><svg style="position:absolute;left:1164.70px;top:737.70px;" width="30.40" height="30.40" viewBox="0 0 24 24"><path fill="#707070" d="M19.43 12.98c.04-.32.07-.64.07-.98s-.03-.66-.07-.98l2.11-1.65c.19-.15.24-.42.12-.64l-2-3.46c-.12-.22-.39-.3-.61-.22l-2.49 1c-.52-.4-1.08-.73-1.69-.98l-.38-2.65C14.46 2.18 14.25 2 14 2h-4c-.25 0-.46.18-.49.42l-.38 2.65c-.61.25-1.17.59-1.69.98l-2.49-1c-.23-.09-.49 0-.61.22l-2 3.46c-.13.22-.07.49.12.64l2.11 1.65c-.04.32-.07.65-.07.98s.03.66.07.98l-2.11 1.65c-.19.15-.24.42-.12.64l2 3.46c.12.22.39.3.61.22l2.49-1c.52.4 1.08.73 1.69.98l.38 2.65c.03.24.24.42.49.42h4c.25 0 .46-.18.49-.42l.38-2.65c.61-.25 1.17-.59 1.69-.98l2.49 1c.23.09.49 0 .61-.22l2-3.46c.12-.22.07-.49-.12-.64l-2.11-1.65zM12 15.5c-1.93 0-3.5-1.57-3.5-3.5s1.57-3.5 3.5-3.5 3.5 1.57 3.5 3.5-1.57 3.5-3.5 3.5z"/></svg><div style="position:absolute;left:1133.80px;top:775.00px;font-size:15.6px;line-height:15.6px;letter-spacing:-0.015px;color:#707070;font-weight:normal;font-style:normal;white-space:nowrap;">Configuration</div></div><div style="position:absolute;left:0.00px;top:0.00px;width:1350.00px;height:1.00px;background:#ececec;z-index:10"></div><div style="position:absolute;left:0.00px;top:1.00px;width:1350.00px;height:1.00px;background:#d9d9d9;z-index:10"></div><div style="position:absolute;left:2.00px;top:2.00px;width:1346.00px;height:1.00px;background:#fdfdfd;z-index:10"></div><div style="position:absolute;left:0.00px;top:0.00px;width:1.00px;height:800.00px;background:#1b1b1b;z-index:10"></div><div style="position:absolute;left:1.00px;top:1.00px;width:1.00px;height:799.00px;background:#c4c4c4;z-index:10"></div><div style="position:absolute;left:2.00px;top:2.00px;width:1.00px;height:798.00px;background:#fdfdfd;z-index:10"></div><div style="position:absolute;left:1347.00px;top:2.00px;width:1.00px;height:798.00px;background:#fdfdfd;z-index:10"></div><div style="position:absolute;left:1348.00px;top:1.00px;width:1.00px;height:799.00px;background:#b0b0b0;z-index:10"></div><div style="position:absolute;left:1349.00px;top:0.00px;width:1.00px;height:800.00px;background:#c8c8c8;z-index:10"></div><svg style="position:absolute;left:0;top:790px;z-index:11" width="10" height="10"><path d="M0 0 L1 0 L1 3 A6 6 0 0 0 7 9 L10 9 L10 10 L0 10 Z" fill="#1b2430"/><path d="M2 2 L2 3 A6.5 6.5 0 0 0 8 9.2" stroke="#fdfdfd" stroke-width="1" fill="none"/></svg><svg style="position:absolute;left:1340px;top:790px;z-index:11" width="10" height="10"><path d="M10 0 L9 0 L9 3 A6 6 0 0 1 3 9 L0 9 L0 10 L10 10 Z" fill="#b8b8b8"/></svg><div style="position:absolute;left:0.00px;top:799.00px;width:1350.00px;height:1.00px;background:#f8f8f8;z-index:9"></div>
</body></html>
